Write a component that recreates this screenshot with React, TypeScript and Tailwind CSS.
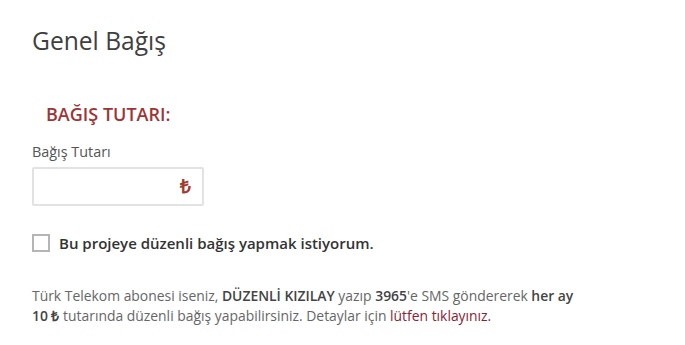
export default function App() {
  return (
    <div className="min-h-[345px] w-[685px] bg-white pl-[32px] pt-[24px] font-['Open_Sans',sans-serif]">
      <h1 className="text-[24.6px] font-medium leading-[34px] text-[#3f3f3f]">Genel Bağış</h1>

      <h2 className="mt-[44px] pl-[14px] text-[18px] font-semibold leading-[24px] text-[#9e3535]">
        BAĞIŞ TUTARI:
      </h2>

      <label className="mt-[16px] block text-[14.4px] leading-[20px] text-[#555555]">Bağış Tutarı</label>

      <div className="mt-[5px] flex h-[39px] w-[172px] items-center justify-end rounded-[2px] border-2 border-[#e2e2e2] pr-[11px]">
        <input className="min-w-0 flex-1 bg-transparent pl-2 text-[14px] outline-none" />
        <span className="text-[19px] font-bold leading-none text-[#a33a2f]">₺</span>
      </div>

      <label className="mt-[27px] flex items-center gap-[9px]">
        <span className="h-[18px] w-[18px] border-2 border-[#b5b5b5] bg-white" />
        <span className="text-[15px] font-semibold leading-[20px] text-[#333333]">
          Bu projeye düzenli bağış yapmak istiyorum.
        </span>
      </label>

      <p className="mt-[33px] w-[550px] text-[13.9px] leading-[20px] text-[#666666]">
        Türk Telekom abonesi iseniz, <b className="font-semibold text-[#444444]">DÜZENLİ KIZILAY</b> yazıp{" "}
        <b className="font-semibold text-[#444444]">3965</b>'e SMS göndererek{" "}
        <b className="font-semibold text-[#444444]">her ay 10 ₺</b> tutarında düzenli bağış yapabilirsiniz. Detaylar
        için <a className="text-[#8a2232]">lütfen tıklayınız.</a>
      </p>
    </div>
  );
}
